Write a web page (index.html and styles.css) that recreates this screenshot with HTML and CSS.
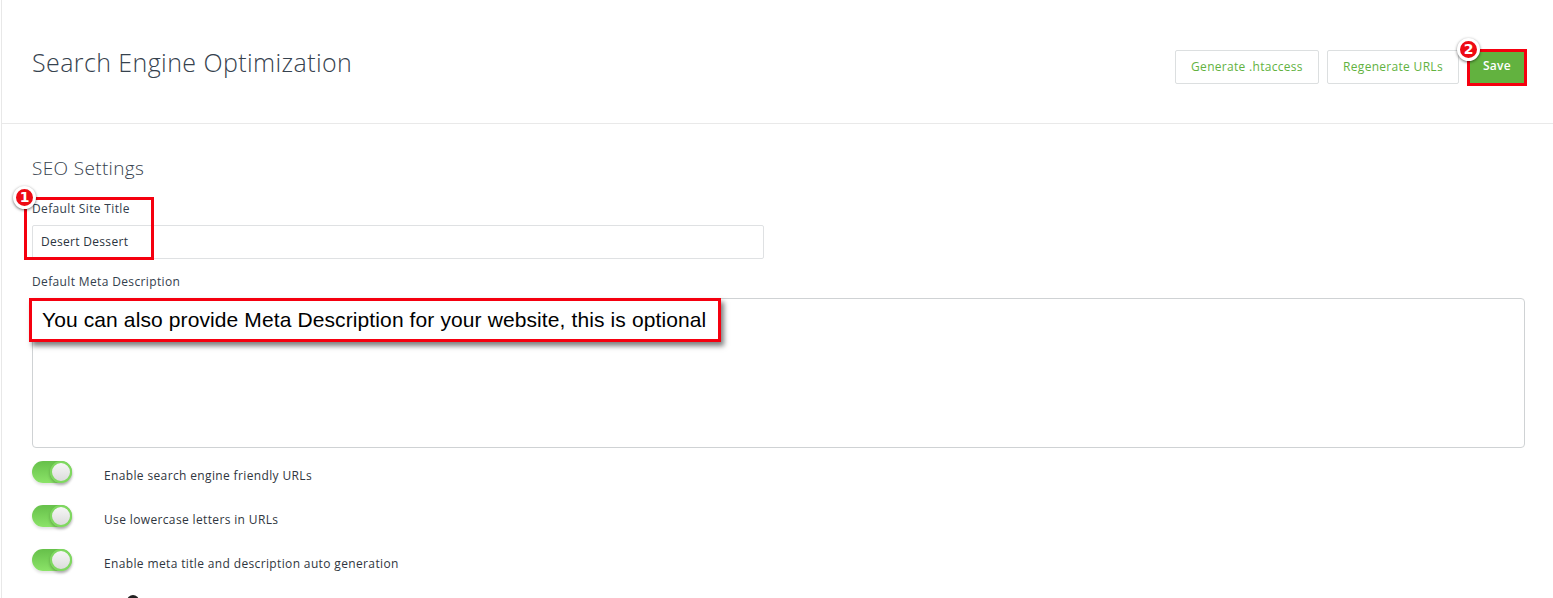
FILE: index.html
```html
<!DOCTYPE html>
<html lang="en">
<head>
<meta charset="utf-8">
<title>Search Engine Optimization</title>
<link rel="stylesheet" href="styles.css">
</head>
<body>
<div class="page">
  <header class="top">
    <h1 class="title">Search Engine Optimization</h1>
    <div class="actions">
      <button class="btn">Generate .htaccess</button>
      <button class="btn btn-regen">Regenerate URLs</button>
      <button class="btn btn-save">Save</button>
    </div>
  </header>
  <main class="content">
    <h2 class="subtitle">SEO Settings</h2>
    <label class="label">Default Site Title</label>
    <div class="input">Desert Dessert</div>
    <label class="label label-meta">Default Meta Description</label>
    <div class="textarea"></div>
    <div class="switch-list">
      <div class="switch-row"><span class="switch"><span class="knob"></span></span><span class="switch-text">Enable search engine friendly URLs</span></div>
      <div class="switch-row"><span class="switch"><span class="knob"></span></span><span class="switch-text">Use lowercase letters in URLs</span></div>
      <div class="switch-row"><span class="switch"><span class="knob"></span></span><span class="switch-text">Enable meta title and description auto generation</span></div>
    </div>
    <span class="clipped-dot"></span>
  </main>
  <div class="mark mark-title"></div>
  <div class="mark mark-save"></div>
  <div class="badge badge-one">1</div>
  <div class="badge badge-two">2</div>
  <div class="callout">You can also provide Meta Description for your website, this is optional</div>
</div>
</body>
</html>
```
FILE: styles.css
```css
html, body { margin: 0; padding: 0; height: 100%; overflow: hidden; background: #fff; }
body { font-family: "Open Sans", "Noto Sans", sans-serif; color: #303c48; }
.page { position: relative; width: 1553px; height: 598px; overflow: hidden; box-sizing: border-box; border-left: 1px solid #e8e8e8; margin-left: 1px; }
.top { height: 123px; box-sizing: content-box; border-bottom: 1px solid #e9e9e9; display: flex; justify-content: space-between; align-items: flex-start; padding: 0 27px 0 30px; }
.title { margin: 44px 0 0; font-size: 25px; line-height: 36px; font-weight: 300; letter-spacing: 0.41px; color: #36424e; }
.actions { display: flex; gap: 8px; margin-top: 50px; }
.btn { height: 34px; padding: 0 0 2px; width: 144px; background: #fff; border: 1px solid #dcdfe0; border-radius: 2px; font: 500 12px "Open Sans", sans-serif; color: #62b23f; letter-spacing: .3px; }
.btn-regen { width: 132px; }
.btn-save { width: 60px; background: #62b23f; border-color: #62b23f; color: #fff; font-weight: 600; padding-bottom: 3px; }
.content { padding: 31px 30px 0; position: relative; height: 443px; }
.subtitle { margin: 0; font-size: 19px; line-height: 26px; font-weight: 300; letter-spacing: .35px; color: #36424e; }
.label { display: block; margin-top: 19px; font-size: 12px; line-height: 17px; color: #33404d; letter-spacing: .36px; }
.label-meta { margin-top: 14px; }
.input { box-sizing: border-box; width: 732px; height: 34px; margin-top: 8px; padding: 0 8px; border: 1px solid #dfe1e3; border-radius: 2px; font-size: 12px; line-height: 32px; color: #2b3440; letter-spacing: .3px; }
.textarea { box-sizing: border-box; width: 1493px; height: 150px; margin-top: 8px; border: 1px solid #cfd2d4; border-radius: 4px; }
.switch-list { display: flex; flex-direction: column; gap: 22px; margin-top: 13px; }
.switch-row { display: flex; align-items: flex-start; height: 22px; }
.switch { position: relative; display: block; width: 40px; height: 22px; border-radius: 11px; background: linear-gradient(180deg, #66c04a, #8be368); box-shadow: 0 2px 3px rgba(0,0,0,.12); }
.knob { position: absolute; right: 0; top: 0; width: 22px; height: 22px; box-sizing: border-box; border-radius: 50%; border: 2px solid #7fd860; background: linear-gradient(180deg, #f6f6f6, #dcdcdc); box-shadow: 0 2px 3px rgba(0,0,0,.25); }
.switch-text { margin: 6px 0 0 32px; font-size: 12px; line-height: 17px; color: #2f3640; letter-spacing: .36px; }
.clipped-dot { position: absolute; left: 125px; top: 471px; width: 12px; height: 12px; border-radius: 50%; background: #222; }
.mark { position: absolute; box-sizing: border-box; border: 3px solid #f5000f; }
.mark-title { left: 22px; top: 197px; width: 130px; height: 63px; }
.mark-save { left: 1465px; top: 49px; width: 60px; height: 37px; }
.badge { position: absolute; box-sizing: border-box; width: 23px; height: 23px; border-radius: 50%; border: 3px solid #fff; background: #ee0a14; color: #fff; font: 700 14px/17px "DejaVu Sans", sans-serif; text-align: center; box-shadow: 0 1px 3px rgba(0,0,0,.55); }
.badge-one { left: 11px; top: 186px; }
.badge-two { left: 1455px; top: 38px; }
.callout { position: absolute; left: 27px; top: 298px; width: 692px; height: 44px; box-sizing: border-box; border: 3px solid #f5000f; background: #fff; padding-left: 10px; font: 21px/38px "Liberation Sans", Arial, sans-serif; letter-spacing: .11px; color: #000; white-space: nowrap; box-shadow: 3px 4px 5px rgba(0,0,0,.5); }
```
